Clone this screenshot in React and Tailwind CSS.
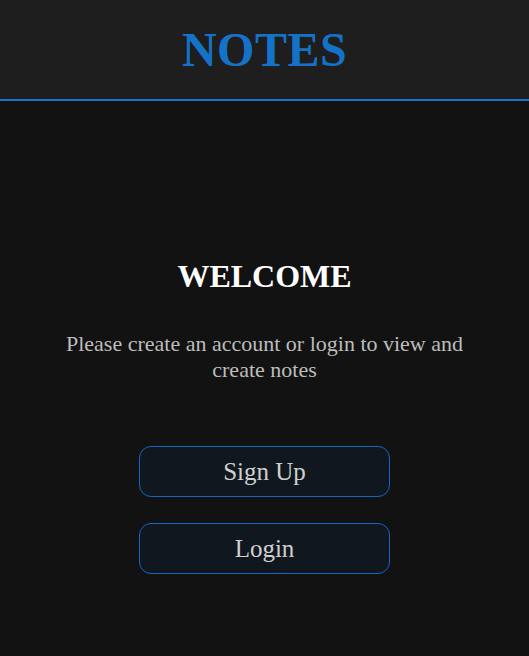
export default function App() {
  return (
    <div className="min-h-screen bg-[#121212] font-['Liberation_Serif',serif]">
      <header className="h-[101px] bg-[#1e1e1e] border-b-2 border-[#1873cc] flex items-center justify-center">
        <h1 className="text-[48px] font-bold text-[#1473c9] tracking-[0.5px] leading-none">NOTES</h1>
      </header>
      <main className="flex flex-col items-center pt-[155px]">
        <h2 className="text-[32px] leading-[40px] font-bold text-white">WELCOME</h2>
        <p className="mt-[35px] max-w-[420px] text-center text-[22px] leading-[26px] text-[#bdbdbd]">
          Please create an account or login to view and create notes
        </p>
        <div className="mt-[63px] flex flex-col gap-[26px]">
          <button className="w-[251px] h-[51px] rounded-[12px] border border-[#1567c2] bg-[#10171e] text-[25px] text-[#cfcfcf]">
            Sign Up
          </button>
          <button className="w-[251px] h-[51px] rounded-[12px] border border-[#1567c2] bg-[#10171e] text-[25px] text-[#cfcfcf]">
            Login
          </button>
        </div>
      </main>
    </div>
  );
}
